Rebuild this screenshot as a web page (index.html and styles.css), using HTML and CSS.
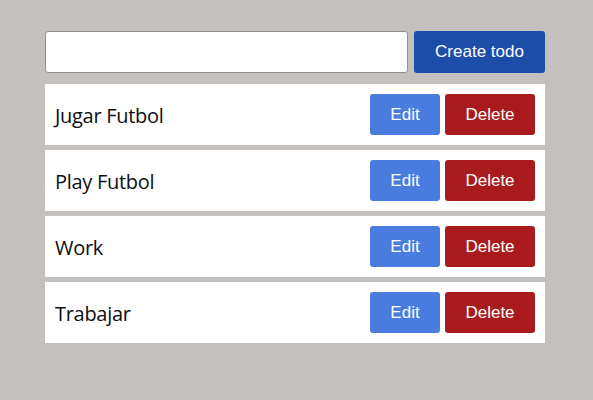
FILE: index.html
```html
<!DOCTYPE html>
<html>
<head>
<meta charset="utf-8">
<link rel="stylesheet" href="styles.css">
</head>
<body>
<div class="app">
  <form class="new-todo">
    <input class="todo-input" type="text">
    <button class="btn btn-create" type="button">Create todo</button>
  </form>
  <ul class="todo-list">
    <li class="todo"><span class="todo-text">Jugar Futbol</span><div class="actions"><button class="btn btn-edit">Edit</button><button class="btn btn-delete">Delete</button></div></li>
    <li class="todo"><span class="todo-text">Play Futbol</span><div class="actions"><button class="btn btn-edit">Edit</button><button class="btn btn-delete">Delete</button></div></li>
    <li class="todo"><span class="todo-text">Work</span><div class="actions"><button class="btn btn-edit">Edit</button><button class="btn btn-delete">Delete</button></div></li>
    <li class="todo"><span class="todo-text">Trabajar</span><div class="actions"><button class="btn btn-edit">Edit</button><button class="btn btn-delete">Delete</button></div></li>
  </ul>
</div>
</body>
</html>
```

FILE: styles.css
```css
html, body {
  margin: 0;
  padding: 0;
  background: #c4c0be;
  height: 100%;
}
body {
  padding-top: 31px;
  box-sizing: border-box;
}
.app {
  width: 500px;
  margin-left: 45px;
}
.new-todo {
  display: flex;
  gap: 6px;
  margin: 0 0 11px 0;
}
.todo-input {
  flex: 1;
  height: 42px;
  box-sizing: border-box;
  border: 1px solid #8f8f8f;
  border-radius: 3px;
  background: #fff;
  margin: 0;
  font-size: 18px;
}
.btn {
  font-family: "Liberation Sans", Arial, sans-serif;
  font-size: 17px;
  color: #fff;
  border: none;
  border-radius: 3px;
  cursor: pointer;
  margin: 0;
  padding: 0;
}
.btn-create {
  width: 131px;
  height: 42px;
  background: #1c4ea9;
}
.todo-list {
  list-style: none;
  margin: 0;
  padding: 0;
  display: flex;
  flex-direction: column;
  gap: 5px;
}
.todo {
  display: flex;
  align-items: center;
  justify-content: space-between;
  background: #fff;
  padding: 10px 10px 10px 10px;
  height: 61px;
  box-sizing: border-box;
}
.todo-text {
  font-family: "Open Sans", "Noto Sans", sans-serif;
  font-size: 20px;
  letter-spacing: -0.3px;
  color: #0d0d14;
  padding-top: 1px;
}
.actions {
  display: flex;
  gap: 5px;
}
.btn-edit {
  width: 70px;
  height: 41px;
  background: #4a7cdf;
}
.btn-delete {
  width: 90px;
  height: 41px;
  background: #a81a1c;
}
```
